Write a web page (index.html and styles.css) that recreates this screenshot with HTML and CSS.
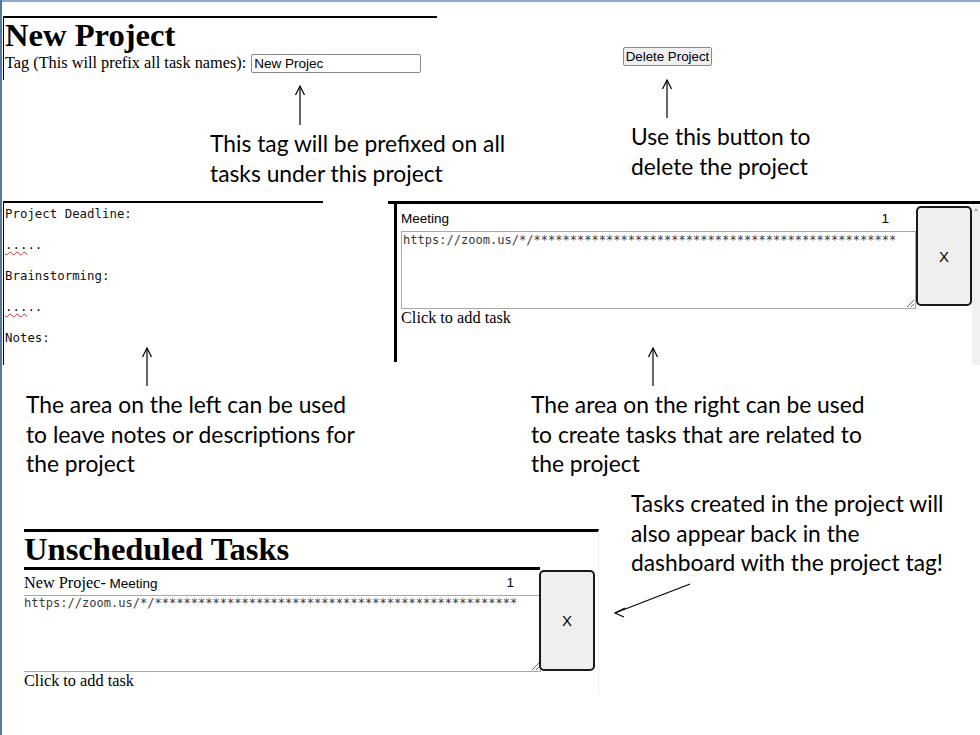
FILE: index.html
```html
<!DOCTYPE html>
<html>
<head>
<meta charset="utf-8">
<title>New Project</title>
<link rel="stylesheet" href="styles.css">
</head>
<body>
<div class="slide">
  <section class="shot shot-project">
    <h1 class="project-title">New Project</h1>
    <div class="tag-row">
      <span class="tag-label">Tag (This will prefix all task names):</span>
      <input class="tag-input" type="text" value="New Projec" readonly>
    </div>
  </section>

  <button class="delete-btn" type="button">Delete Project</button>

  <p class="callout c-tag">This tag will be prefixed on all<br>tasks under this project</p>
  <p class="callout c-delete">Use this button to<br>delete the project</p>

  <section class="shot shot-notes">
    <div class="note-line">Project Deadline:</div>
    <div class="note-line"><span class="squiggle">...</span>..</div>
    <div class="note-line">Brainstorming:</div>
    <div class="note-line"><span class="squiggle">...</span>..</div>
    <div class="note-line">Notes:</div>
  </section>

  <section class="shot shot-tasks">
    <div class="task-pane">
      <div class="task-inner">
        <div class="task-card">
          <div class="task-main">
            <div class="task-head"><span class="task-name">Meeting</span><span class="task-count">1</span></div>
            <textarea class="task-text" readonly>https://zoom.us/*/**************************************************</textarea>
            <div class="add-task">Click to add task</div>
          </div>
          <button class="x-btn" type="button">X</button>
        </div>
      </div>
    </div>
    <div class="scrollbar"><span class="scroll-up"></span></div>
  </section>

  <p class="callout c-left">The area on the left can be used<br>to leave notes or descriptions for<br>the project</p>
  <p class="callout c-right">The area on the right can be used<br>to create tasks that are related to<br>the project</p>
  <p class="callout c-dash">Tasks created in the project will<br>also appear back in the<br>dashboard with the project tag!</p>

  <section class="shot shot-unscheduled">
    <h2 class="unsched-title">Unscheduled Tasks</h2>
    <div class="task-card card-bottom">
      <div class="task-main main-bottom">
        <div class="task-head"><span><span class="tag-prefix">New Projec-</span> <span class="task-name">Meeting</span></span><span class="task-count">1</span></div>
        <textarea class="task-text text-bottom" readonly>https://zoom.us/*/**************************************************</textarea>
        <div class="add-task">Click to add task</div>
      </div>
      <button class="x-btn x-bottom" type="button">X</button>
    </div>
  </section>

  <svg class="arrows" width="980" height="735" viewBox="0 0 980 735" aria-hidden="true">
    <g fill="none" stroke="#000" stroke-width="1.2">
      <line x1="300" y1="86" x2="300" y2="125"/>
      <polyline points="295.5,95 300,86 304.5,95"/>
      <line x1="667" y1="80" x2="667" y2="118"/>
      <polyline points="662.5,89 667,80 671.5,89"/>
      <line x1="147" y1="348" x2="147" y2="386"/>
      <polyline points="142.5,357 147,348 151.5,357"/>
      <line x1="653" y1="348" x2="653" y2="386"/>
      <polyline points="648.5,357 653,348 657.5,357"/>
      <line x1="690" y1="584" x2="615" y2="613"/>
      <polyline points="625,608 615,613 624,617"/>
    </g>
  </svg>
</div>
</body>
</html>
```

FILE: styles.css
```css
html, body {
  margin: 0;
  padding: 0;
  background: #fff;
}

.slide {
  position: relative;
  width: 980px;
  height: 735px;
  overflow: hidden;
  background: #fff;
  font-family: "Liberation Serif", "Times New Roman", serif;
  color: #000;
}

.slide::before {
  content: "";
  position: absolute;
  left: 0;
  top: 0;
  width: 980px;
  height: 2px;
  background: #8eaad0;
}

.slide::after {
  content: "";
  position: absolute;
  left: 0;
  top: 0;
  width: 2px;
  height: 735px;
  background: #5478a2;
}

.shot {
  position: absolute;
  box-sizing: border-box;
  background: #fff;
}

/* ---------- project header shot ---------- */
.shot-project {
  left: 3px;
  top: 16px;
  width: 434px;
  height: 64px;
  border-top: 2px solid #000;
  border-left: 1px solid #000;
  padding-left: 1px;
}

.project-title {
  margin: 0;
  font-size: 32.6px;
  line-height: 34px;
  font-weight: bold;
}

.tag-row {
  display: flex;
  align-items: center;
  gap: 5px;
  height: 22px;
}

.tag-label {
  font-size: 16.3px;
  line-height: 18px;
}

.tag-input {
  box-sizing: border-box;
  width: 170px;
  height: 19px;
  margin: 0;
  padding: 0 2px;
  border: 1px solid #8a8a8a;
  border-radius: 2px;
  font-family: "Liberation Sans", Arial, sans-serif;
  font-size: 13.5px;
  color: #000;
  background: #fff;
  outline: none;
}

.delete-btn {
  position: absolute;
  left: 623px;
  top: 47px;
  box-sizing: border-box;
  width: 89px;
  height: 19px;
  margin: 0;
  padding: 0;
  border: 1px solid #8a8a8a;
  border-radius: 2px;
  background: #efefef;
  font-family: "Liberation Sans", Arial, sans-serif;
  font-size: 13.3px;
  line-height: 17px;
  color: #000;
}

/* ---------- callouts ---------- */
.callout {
  position: absolute;
  margin: 0;
  font-family: Lato, "Open Sans", sans-serif;
  font-size: 22.8px;
  line-height: 29.5px;
  color: #000;
  white-space: nowrap;
}

.c-tag { left: 210px; top: 129px; }
.c-delete { left: 631px; top: 122px; }
.c-left { left: 26px; top: 390px; }
.c-right { left: 531px; top: 390px; }
.c-dash { left: 631px; top: 489px; }

/* ---------- notes shot ---------- */
.shot-notes {
  left: 3px;
  top: 201px;
  width: 320px;
  height: 164px;
  border-top: 2px solid #000;
  border-left: 1px solid #000;
  padding: 3px 0 0 1px;
  display: flex;
  flex-direction: column;
  gap: 16px;
  font-family: "DejaVu Sans Mono", "Liberation Mono", monospace;
  font-size: 12.4px;
  line-height: 15px;
  color: #111;
}

.squiggle {
  text-decoration: underline wavy #d42a2a;
  text-decoration-thickness: 1px;
  text-underline-offset: 2px;
}

/* ---------- tasks shot ---------- */
.shot-tasks {
  left: 388px;
  top: 201px;
  width: 592px;
  height: 164px;
  border-top: 3px solid #000;
  display: flex;
}

.task-pane {
  flex: 1;
  padding-left: 6px;
}

.task-inner {
  box-sizing: border-box;
  height: 158px;
  border-left: 3px solid #000;
  padding: 1px 0 0 4px;
}

.task-card {
  display: flex;
  align-items: flex-start;
}

.task-main {
  box-sizing: border-box;
  width: 515px;
  display: flex;
  flex-direction: column;
}

.task-head {
  display: flex;
  justify-content: space-between;
  align-items: center;
  height: 26px;
  padding-right: 27px;
  font-family: "Liberation Sans", Arial, sans-serif;
  font-size: 13.5px;
}

.tag-prefix {
  font-family: "Liberation Serif", "Times New Roman", serif;
  font-size: 16.3px;
}

.task-text {
  box-sizing: border-box;
  display: block;
  width: 515px;
  height: 78px;
  margin: 0;
  padding: 1px 1px;
  border: 1px solid #a9a9a9;
  font-family: "DejaVu Sans Mono", "Liberation Mono", monospace;
  font-size: 12.05px;
  line-height: 14px;
  color: #3a3a3a;
  background: #fff;
  outline: none;
  resize: both;
  overflow: hidden;
}

.add-task {
  font-size: 16.3px;
  line-height: 17px;
}

.x-btn {
  box-sizing: border-box;
  width: 56px;
  height: 100px;
  margin: 1px 0 0 0;
  padding: 0;
  border: 2px solid #1a1a1a;
  border-radius: 5px;
  background: #efefef;
  font-family: "Liberation Sans", Arial, sans-serif;
  font-size: 15px;
  color: #000;
}

.scrollbar {
  position: relative;
  width: 8px;
  margin-top: 1px;
  background: #f1f1f1;
}

.scroll-up {
  position: absolute;
  left: 2px;
  top: 3px;
  width: 0;
  height: 0;
  border-left: 2px solid transparent;
  border-right: 2px solid transparent;
  border-bottom: 3px solid #a3a3a3;
}

/* ---------- unscheduled shot ---------- */
.shot-unscheduled {
  left: 24px;
  top: 529px;
  width: 575px;
  height: 166px;
  border-top: 3px solid #000;
  border-right: 1px solid #eeeeee;
}

.unsched-title {
  margin: 0;
  font-size: 32.6px;
  line-height: 35px;
  font-weight: bold;
}

.main-bottom {
  width: 516px;
  border-top: 3px solid #000;
}

.main-bottom .task-head {
  height: 25px;
  padding-right: 26px;
}

.text-bottom {
  width: 517px;
  height: 77px;
  padding: 0 1px 0 0;
  border-left: none;
}

.x-bottom {
  width: 56px;
  height: 101px;
  margin-top: 3px;
  margin-left: -1px;
}

/* ---------- arrows overlay ---------- */
.arrows {
  position: absolute;
  left: 0;
  top: 0;
  pointer-events: none;
}
```
